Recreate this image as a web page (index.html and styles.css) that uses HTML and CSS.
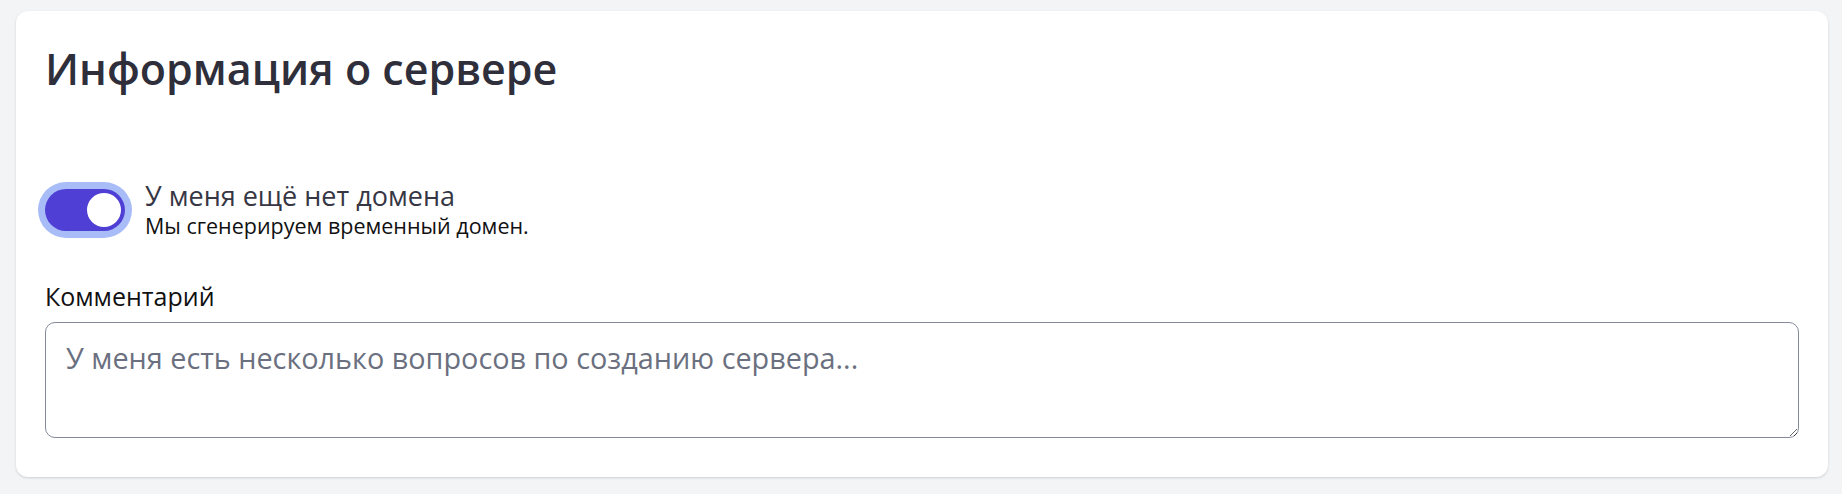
FILE: index.html
```html
<!DOCTYPE html>
<html lang="ru">
<head>
<meta charset="utf-8">
<title>Информация о сервере</title>
<link rel="stylesheet" href="styles.css">
</head>
<body>
<section class="card">
  <h1 class="title">Информация о сервере</h1>
  <div class="toggle-row">
    <span class="toggle" role="switch" aria-checked="true"><span class="knob"></span></span>
    <div class="toggle-text">
      <div class="toggle-label">У меня ещё нет домена</div>
      <div class="toggle-hint">Мы сгенерируем временный домен.</div>
    </div>
  </div>
  <label class="field-label" for="comment">Комментарий</label>
  <textarea id="comment" class="field" placeholder="У меня есть несколько вопросов по созданию сервера..."></textarea>
</section>
</body>
</html>
```
FILE: styles.css
```css
html, body {
  margin: 0;
  padding: 0;
}
body {
  background: #f3f4f6;
  font-family: "Open Sans", "Noto Sans", sans-serif;
  padding: 11px 14px 17px 16px;
}
.card {
  background: #ffffff;
  border-radius: 12px;
  box-shadow: 0 1px 3px rgba(0, 0, 0, 0.1), 0 1px 2px rgba(0, 0, 0, 0.06);
  padding: 32px 29px 39px 29px;
  display: flex;
  flex-direction: column;
}
.title {
  margin: 0;
  font-size: 43px;
  line-height: 52px;
  font-weight: 600;
  color: #2f2f3b;
}
.toggle-row {
  margin-top: 85px;
  display: flex;
  align-items: center;
  gap: 20px;
}
.toggle {
  width: 80px;
  height: 42px;
  border-radius: 21px;
  background: #4f3fd4;
  box-shadow: 0 0 0 7px #a8bdf8;
  display: flex;
  align-items: center;
  justify-content: flex-end;
  padding: 0 4px;
  box-sizing: border-box;
  flex: none;
}
.knob {
  width: 34px;
  height: 34px;
  border-radius: 50%;
  background: #ffffff;
}
.toggle-text {
  display: flex;
  flex-direction: column;
}
.toggle-label {
  font-size: 27px;
  line-height: 32px;
  color: #363644;
}
.toggle-hint {
  font-size: 21.5px;
  line-height: 28px;
  color: #111111;
}
.field-label {
  margin-top: 40px;
  font-size: 25px;
  line-height: 32px;
  color: #111111;
}
.field {
  margin-top: 10px;
  width: 100%;
  height: 116px;
  box-sizing: border-box;
  border: 1px solid #858a98;
  border-radius: 10px;
  padding: 15px 20px;
  font-family: "Open Sans", "Noto Sans", sans-serif;
  font-size: 28.8px;
  line-height: 40px;
  color: #111111;
  background: #ffffff;
  resize: vertical;
  outline: none;
}
.field::placeholder {
  color: #6b7080;
  opacity: 1;
}
```
